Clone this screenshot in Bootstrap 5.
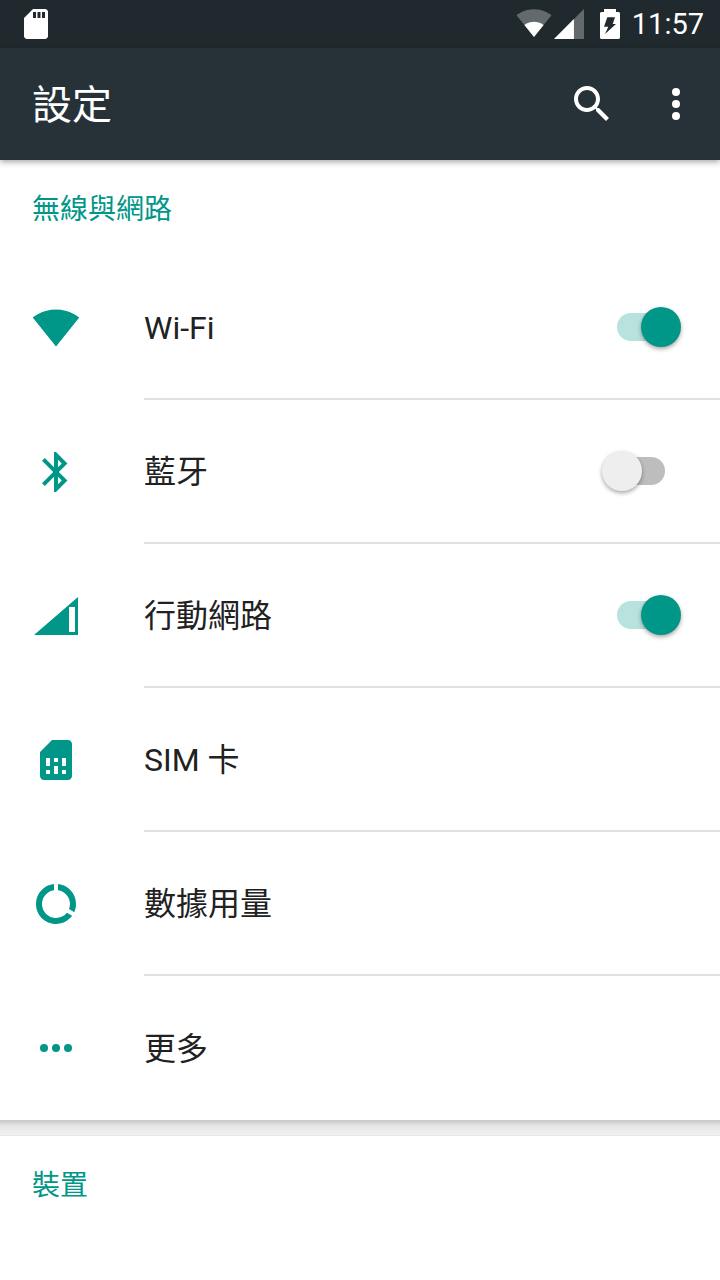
<!DOCTYPE html>
<html lang="zh-Hant">
  <head>
    <meta charset="UTF-8" />
    <meta name="viewport" content="width=device-width, initial-scale=1.0" />
    <title>設定</title>
    <link
      href="https://cdn.jsdelivr.net/npm/bootstrap@5.3.2/dist/css/bootstrap.min.css"
      rel="stylesheet"
    />
    <style>
      body {
        font-family: Roboto, "Noto Sans CJK TC", sans-serif;
        background: #fff;
        color: #212121;
      }
      .status-strip {
        height: 48px;
        background: #20292d;
        padding: 0 16px 0 18px;
      }
      .status-wifi {
        margin-bottom: 4px;
      }
      .status-signal {
        margin-left: -1px;
      }
      .status-battery {
        margin-left: 13px;
      }
      .status-time {
        font-size: 29px;
        line-height: 48px;
        color: #fff;
        margin-left: 12px;
      }
      .app-toolbar {
        height: 112px;
        background: #263238;
        padding: 0 20px 0 32px;
        box-shadow: 0 2px 6px rgba(0, 0, 0, 0.35);
        position: relative;
      }
      .app-title {
        font-size: 40px;
        font-weight: 400;
        color: #fff;
        line-height: 1;
        margin: 0;
        padding-top: 4px;
      }
      .toolbar-more {
        margin-left: 36px;
      }
      .section-head {
        height: 96px;
        padding: 4px 0 0 32px;
        font-size: 28px;
        color: #009688;
      }
      .setting-row {
        height: 144px;
        border: 0;
        padding: 0;
        background: transparent;
      }
      .setting-icon {
        width: 144px;
        flex: none;
        padding-left: 32px;
      }
      .setting-body {
        height: 100%;
        border-bottom: 2px solid #e0e0e0;
        font-size: 32px;
        color: #212121;
        padding-right: 39px;
      }
      .setting-row:last-child .setting-body {
        border-bottom: 0;
      }
      .setting-label {
        padding-top: 2px;
      }
      .toggle-track {
        width: 48px;
        height: 28px;
        border-radius: 14px;
        background: #b8e2dd;
        position: relative;
        margin-right: 16px;
      }
      .toggle-knob {
        width: 40px;
        height: 40px;
        border-radius: 50%;
        background: #009688;
        position: absolute;
        top: -6px;
        right: -16px;
        box-shadow: 0 2px 4px rgba(0, 0, 0, 0.35);
      }
      .toggle-track.is-off {
        background: #bdbdbd;
      }
      .is-off .toggle-knob {
        background: #eeeeee;
        right: auto;
        left: -15px;
      }
      .group-gap {
        height: 16px;
        background: linear-gradient(#c8c8c8, #e6e6e6 40%, #f1f1f1);
        border-bottom: 1px solid #e8e8e8;
      }
    </style>
  </head>

  <body>
    <div class="status-strip d-flex align-items-center">
      <svg width="36" height="36" viewBox="0 0 24 24" fill="#fff">
        <path d="M18 2h-8L4.020 8 4 20c0 1.100.9 2 2 2h12c1.100 0 2-.9 2-2V4c0-1.100-.9-2-2-2zm-6 6h-2V4h2v4zm3 0h-2V4h2v4zm3 0h-2V4h2v4z" />
      </svg>
      <div class="ms-auto d-flex align-items-center">
        <svg class="status-wifi" width="36" height="36" viewBox="0 0 24 24" fill="#fff">
          <path fill-opacity=".3" d="M12 22 23.640 7.500C23.190 7.160 18.710 3.500 12 3.500S.81 7.160.36 7.500z" />
          <path d="M12 22 18.400 14C18.150 13.800 15.700 11.800 12 11.800S5.850 13.800 5.600 14z" />
        </svg>
        <svg class="status-signal" width="36" height="36" viewBox="0 0 24 24" fill="#fff">
          <path fill-opacity=".3" d="M2 22h20V2z" />
          <path d="M2 22h13.300V8.700z" />
        </svg>
        <svg class="status-battery" width="20" height="30" viewBox="0 0 20 30" fill="#fff">
          <path fill-rule="evenodd" d="M4 0h12v3h2.500c.8 0 1.500.7 1.500 1.500v24c0 .8-.7 1.500-1.500 1.500h-17C.7 30 0 29.300 0 28.500v-24C0 3.700.7 3 1.500 3H4zM7.300 8.300H15L12.700 15H16L5 25l3.300-7.300H4z" />
        </svg>
        <span class="status-time">11:57</span>
      </div>
    </div>

    <nav class="navbar app-toolbar d-flex align-items-center flex-nowrap">
      <h1 class="app-title">設定</h1>
      <div class="d-flex align-items-center">
        <svg width="48" height="48" viewBox="0 0 24 24" fill="#fff">
          <path d="M15.500 14h-.79l-.28-.27C15.410 12.590 16 11.110 16 9.500 16 5.910 13.090 3 9.500 3S3 5.910 3 9.500 5.910 16 9.500 16c1.610 0 3.090-.59 4.230-1.570l.27.28v.79l5 4.990L20.490 19l-4.990-5zm-6 0C7.010 14 5 11.990 5 9.500S7.010 5 9.500 5 14 7.010 14 9.500 11.990 14 9.500 14z" />
        </svg>
        <svg class="toolbar-more" width="48" height="48" viewBox="0 0 24 24" fill="#fff">
          <circle cx="12" cy="6" r="2" />
          <circle cx="12" cy="12" r="2" />
          <circle cx="12" cy="18" r="2" />
        </svg>
      </div>
    </nav>

    <div class="section-head d-flex align-items-center">無線與網路</div>

    <div class="list-group list-group-flush">
      <div class="list-group-item setting-row d-flex align-items-center">
        <div class="setting-icon">
          <svg class="d-block" width="48" height="48" viewBox="0 .75 24 24" fill="#009688">
            <path d="M12 22 23.640 7.500C23.190 7.160 18.710 3.500 12 3.500S.81 7.160.36 7.500z" />
          </svg>
        </div>
        <div class="setting-body flex-grow-1 d-flex align-items-center justify-content-between">
          <span class="setting-label">Wi-Fi</span>
          <span class="toggle-track"><span class="toggle-knob"></span></span>
        </div>
      </div>
      <div class="list-group-item setting-row d-flex align-items-center">
        <div class="setting-icon">
          <svg class="d-block" width="48" height="48" viewBox="0 0 24 24" fill="#009688">
            <path d="M17.710 7.710 12 2h-1v7.590L6.410 5 5 6.410 10.590 12 5 17.590 6.410 19 11 14.410V22h1l5.710-5.710-4.300-4.290 4.300-4.290zM13 5.830l1.880 1.880L13 9.590V5.830zm1.880 10.460L13 18.170v-3.760l1.880 1.880z" />
          </svg>
        </div>
        <div class="setting-body flex-grow-1 d-flex align-items-center justify-content-between">
          <span class="setting-label">藍牙</span>
          <span class="toggle-track is-off"><span class="toggle-knob"></span></span>
        </div>
      </div>
      <div class="list-group-item setting-row d-flex align-items-center">
        <div class="setting-icon">
          <svg class="d-block" width="48" height="48" viewBox="0 0 24 24" fill="#009688">
            <path fill-rule="evenodd" d="M1 21.500h22V2.500zM18.500 7.500h3V20h-3z" />
          </svg>
        </div>
        <div class="setting-body flex-grow-1 d-flex align-items-center justify-content-between">
          <span class="setting-label">行動網路</span>
          <span class="toggle-track"><span class="toggle-knob"></span></span>
        </div>
      </div>
      <div class="list-group-item setting-row d-flex align-items-center">
        <div class="setting-icon">
          <svg class="d-block" width="48" height="48" viewBox="0 0 24 24" fill="#009688">
            <path d="M19.990 4c0-1.100-.89-2-1.990-2h-8L4 8v12c0 1.100.9 2 2 2h12c1.100 0 2-.9 2-2l-.01-16zM9 19H7v-2h2v2zm8 0h-2v-2h2v2zm-8-4H7v-4h2v4zm4 4h-2v-4h2v4zm0-6h-2v-2h2v2zm4 2h-2v-4h2v4z" />
          </svg>
        </div>
        <div class="setting-body flex-grow-1 d-flex align-items-center justify-content-between">
          <span class="setting-label">SIM 卡</span>
        </div>
      </div>
      <div class="list-group-item setting-row d-flex align-items-center">
        <div class="setting-icon">
          <svg class="d-block" width="48" height="48" viewBox="0 0 24 24" fill="#009688">
            <path d="M13 2.050v3.030c3.390.49 6 3.390 6 6.920 0 .9-.18 1.750-.48 2.540l2.600 1.530c.56-1.240.88-2.620.88-4.070 0-5.180-3.950-9.450-9-9.950zM12 19c-3.870 0-7-3.130-7-7 0-3.530 2.610-6.430 6-6.920V2.050c-5.060.5-9 4.760-9 9.950 0 5.520 4.470 10 9.990 10 3.310 0 6.240-1.610 8.060-4.090l-2.600-1.530C16.170 17.980 14.210 19 12 19z" />
          </svg>
        </div>
        <div class="setting-body flex-grow-1 d-flex align-items-center justify-content-between">
          <span class="setting-label">數據用量</span>
        </div>
      </div>
      <div class="list-group-item setting-row d-flex align-items-center">
        <div class="setting-icon">
          <svg class="d-block" width="48" height="48" viewBox="0 0 24 24" fill="#009688">
            <circle cx="6" cy="12" r="2" />
            <circle cx="12" cy="12" r="2" />
            <circle cx="18" cy="12" r="2" />
          </svg>
        </div>
        <div class="setting-body flex-grow-1 d-flex align-items-center justify-content-between">
          <span class="setting-label">更多</span>
        </div>
      </div>
    </div>

    <div class="group-gap"></div>
    <div class="section-head d-flex align-items-center">裝置</div>

    <script src="https://cdn.jsdelivr.net/npm/bootstrap@5.3.2/dist/js/bootstrap.bundle.min.js"></script>
  </body>
</html>
